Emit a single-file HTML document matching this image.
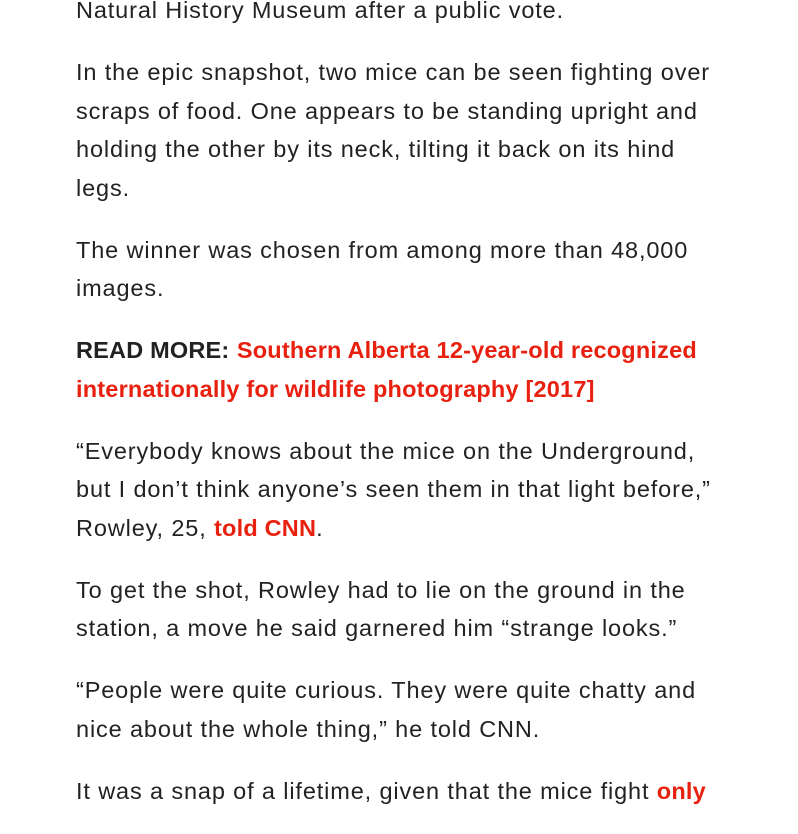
<!DOCTYPE html>
<html><head><meta charset="utf-8"><style>
html,body{margin:0;padding:0;background:#fff;width:798px;height:811px;overflow:hidden}
.c{position:absolute;left:76px;top:-9px;font-family:"Liberation Sans",Arial,sans-serif;font-size:23.5px;letter-spacing:0.87px;line-height:38.5px;color:#222;white-space:nowrap}
p{margin:0 0 23.5px 0}
b{font-weight:bold;letter-spacing:0.2px}
a{color:#e8200f;font-weight:bold;text-decoration:none;letter-spacing:0.2px}
</style></head><body><div class="c">
<p>Natural History Museum after a public vote.</p>
<p>In the epic snapshot, two mice can be seen fighting over<br>scraps of food. One appears to be standing upright and<br>holding the other by its neck, tilting it back on its hind<br>legs.</p>
<p>The winner was chosen from among more than 48,000<br>images.</p>
<p><b>READ MORE:</b> <a>Southern Alberta 12-year-old recognized<br>internationally for wildlife photography [2017]</a></p>
<p>“Everybody knows about the mice on the Underground,<br>but I don’t think anyone’s seen them in that light before,”<br>Rowley, 25, <a>told CNN</a>.</p>
<p>To get the shot, Rowley had to lie on the ground in the<br>station, a move he said garnered him “strange looks.”</p>
<p>“People were quite curious. They were quite chatty and<br>nice about the whole thing,” he told CNN.</p>
<p>It was a snap of a lifetime, given that the mice fight <a>only</a></p>
</div></body></html>
